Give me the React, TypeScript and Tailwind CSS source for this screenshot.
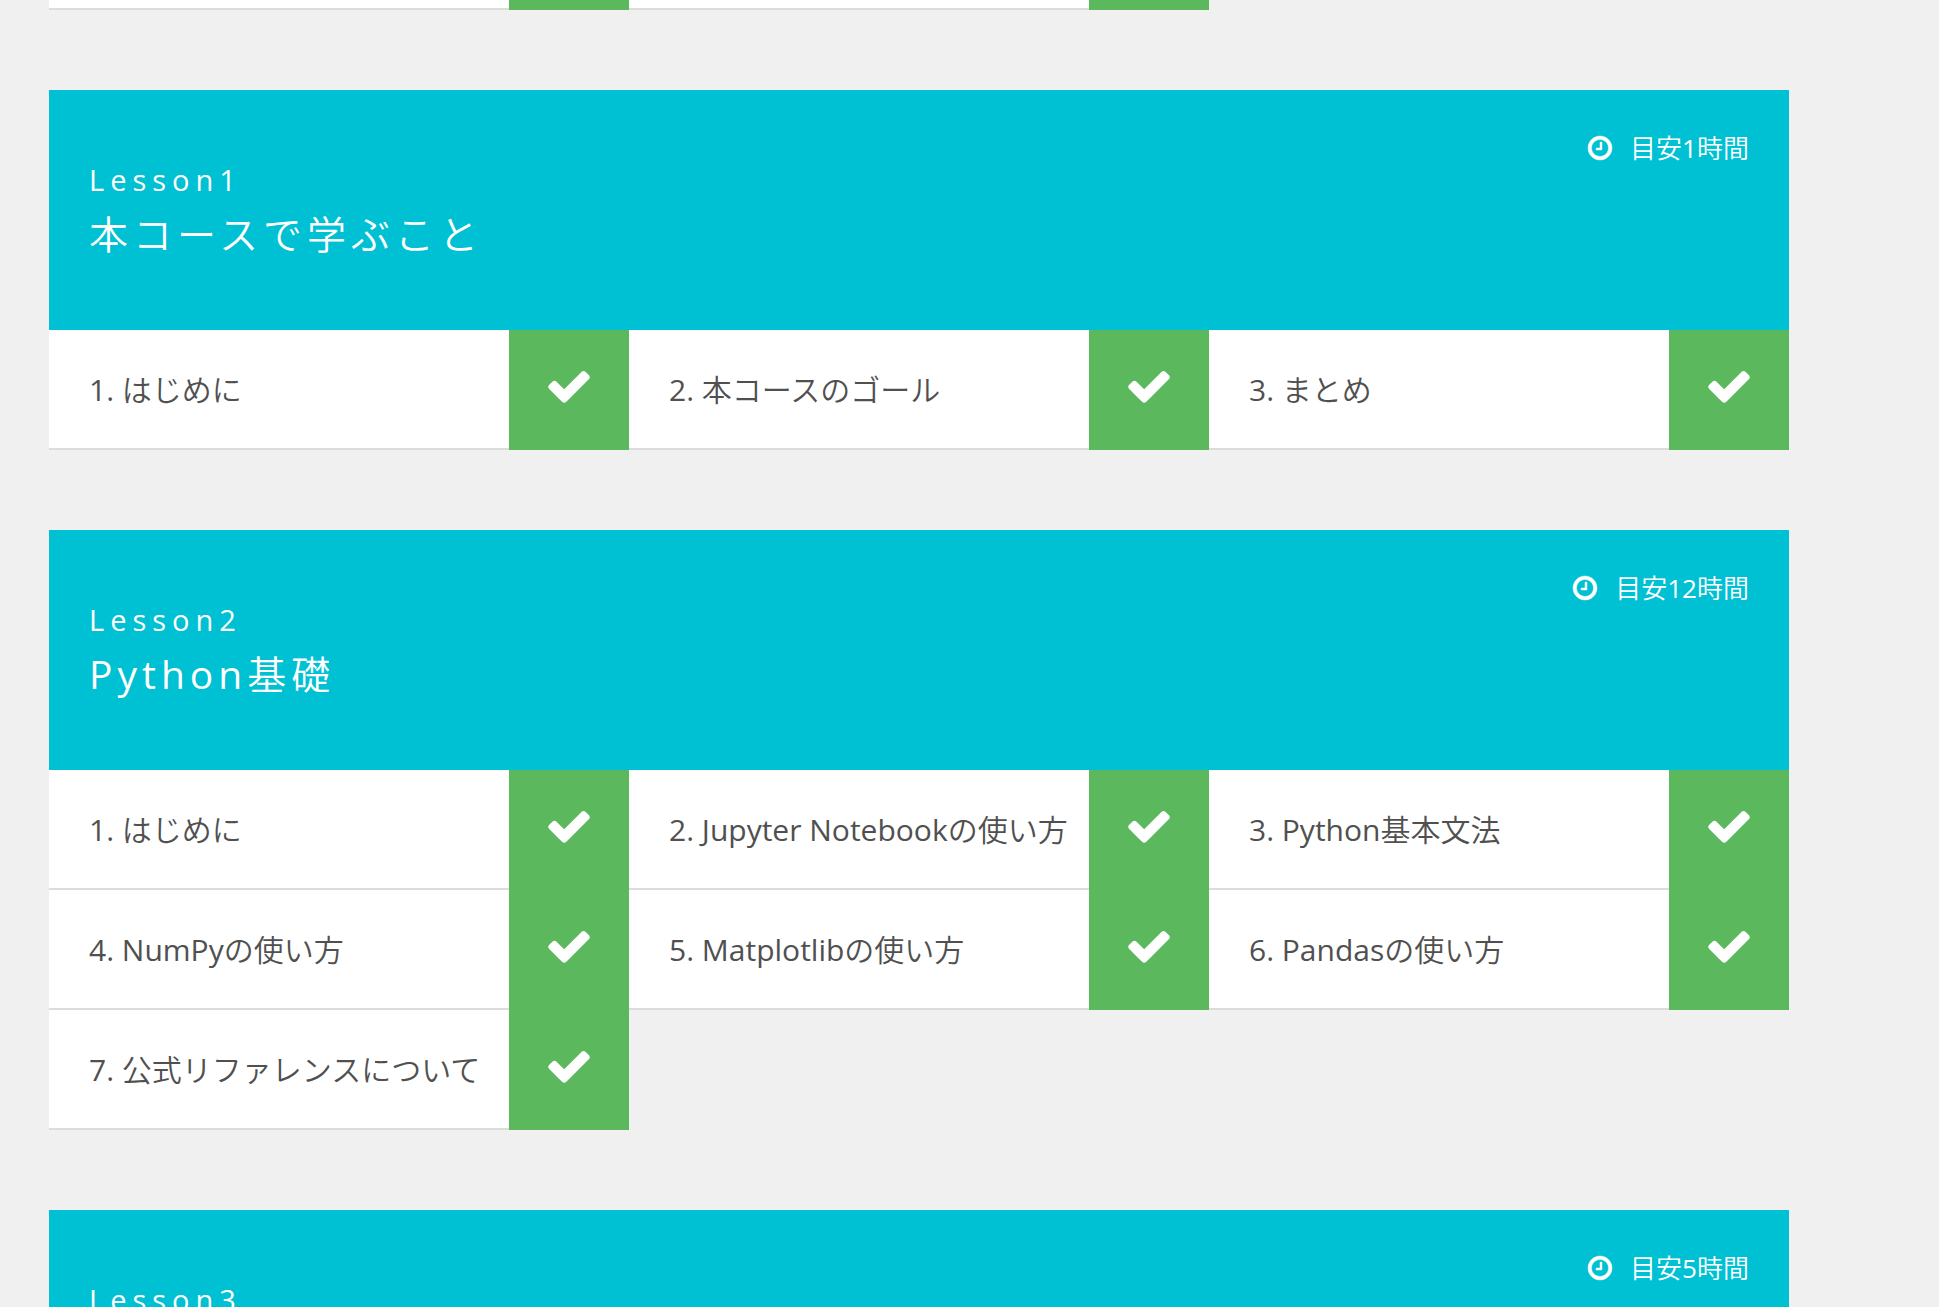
import React from 'react';

interface Lesson {
  id: number;
  title: string;
  hours: number;
  chapters: string[];
}

const lessons: Lesson[] = [
  {
    id: 1,
    title: '本コースで学ぶこと',
    hours: 1,
    chapters: ['はじめに', '本コースのゴール', 'まとめ'],
  },
  {
    id: 2,
    title: 'Python基礎',
    hours: 12,
    chapters: [
      'はじめに',
      'Jupyter Notebookの使い方',
      'Python基本文法',
      'NumPyの使い方',
      'Matplotlibの使い方',
      'Pandasの使い方',
      '公式リファレンスについて',
    ],
  },
  {
    id: 3,
    title: '',
    hours: 5,
    chapters: [],
  },
];

const ClockIcon = () => (
  <svg viewBox="0 0 1792 1792" className="size-7 fill-current stroke-current stroke-[30]" aria-hidden="true">
    <path d="M1024 544v448q0 14-9 23t-23 9h-320q-14 0-23-9t-9-23v-64q0-14 9-23t23-9h224v-352q0-14 9-23t23-9h64q14 0 23 9t9 23zm416 352q0-148-73-273t-198-198-273-73-273 73-198 198-73 273 73 273 198 198 273 73 273-73 198-198 73-273zm224 0q0 209-103 385.5t-279.5 279.5-385.5 103-385.5-103-279.5-279.5-103-385.5 103-385.5 279.5-279.5 385.5-103 385.5 103 279.5 279.5 103 385.5z" />
  </svg>
);

const CheckIcon = () => (
  <svg viewBox="0 0 1792 1792" className="size-12 fill-white" aria-hidden="true">
    <path d="M1671 566q0 40-28 68l-724 724-136 136q-28 28-68 28t-68-28l-136-136-362-362q-28-28-28-68t28-68l136-136q28-28 68-28t68 28l294 295 656-657q28-28 68-28t68 28l136 136q28 28 28 68z" />
  </svg>
);

const ChapterCard = ({ label }: { label: string }) => (
  <li className="h-[120px]">
    <a href="#" className="flex h-full bg-white">
      <span className="flex min-w-0 flex-1 items-center whitespace-nowrap border-b-2 border-[#dcdcdc] pl-10 text-[30px] text-[#505050]">
        {label}
      </span>
      <span className="flex w-[120px] shrink-0 items-center justify-center bg-[#5cb85c] pb-2">
        <CheckIcon />
      </span>
    </a>
  </li>
);

const LessonSection = ({ lesson }: { lesson: Lesson }) => (
  <section>
    <header className="flex h-[240px] items-start justify-between bg-[#00c0d3] px-10 text-white">
      <div className="pt-[70px]">
        <p className="text-[29px] leading-10 tracking-[6px]">Lesson{lesson.id}</p>
        <h2 className="mt-1 text-[39px] leading-[60px] tracking-[5px]">{lesson.title}</h2>
      </div>
      <p className="flex items-center gap-4 pt-10 text-[26px] leading-9">
        <ClockIcon />
        <span>目安{lesson.hours}時間</span>
      </p>
    </header>
    <ul className="grid grid-cols-3">
      {lesson.chapters.map((chapter, index) => (
        <ChapterCard key={index} label={`${index + 1}. ${chapter}`} />
      ))}
    </ul>
  </section>
);

const App = () => {
  return (
    <div className="h-screen overflow-hidden bg-[#f0f0f0] pl-[49px] pr-[150px] font-['Open_Sans','Noto_Sans_CJK_JP_DemiLight','Noto_Sans_CJK_JP_Light','Noto_Sans_CJK_JP',sans-serif]">
      {/* tail of the previous lesson */}
      <div className="grid h-2.5 grid-cols-3">
        {[0, 1].map((n) => (
          <div key={n} className="flex">
            <div className="flex-1 border-b-2 border-[#dcdcdc] bg-white" />
            <div className="w-[120px] bg-[#5cb85c]" />
          </div>
        ))}
      </div>
      <main className="flex flex-col gap-20 pt-20">
        {lessons.map((lesson) => (
          <LessonSection key={lesson.id} lesson={lesson} />
        ))}
      </main>
    </div>
  );
};

export default App;
